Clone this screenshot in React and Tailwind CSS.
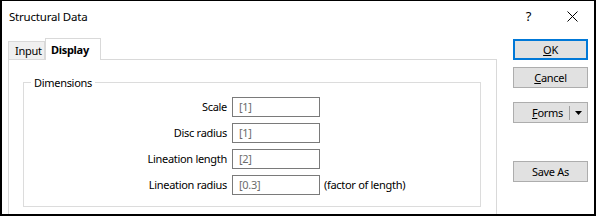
import React from "react";

const rows = [
  { label: "Scale", value: "[1]" },
  { label: "Disc radius", value: "[1]" },
  { label: "Lineation length", value: "[2]" },
  { label: "Lineation radius", value: "[0.3]", suffix: "(factor of length)" },
];

function Btn({ children, primary, className = "" }) {
  return (
    <div
      className={`w-[75px] h-[21px] flex items-center justify-center bg-[#e1e1e1] text-black ${
        primary ? "border-2 border-[#0078d7]" : "border border-[#adadad]"
      } ${className}`}
    >
      {children}
    </div>
  );
}

export default function App() {
  return (
    <div
      className="w-[596px] h-[216px] bg-white border-black border-t border-l-2 border-r-2 border-b-2 overflow-hidden flex flex-col text-[11px] leading-[14px] tracking-[-0.3px] text-black"
      style={{ fontFamily: '"Noto Sans", "Segoe UI", sans-serif' }}
    >
      {/* Title bar */}
      <div className="h-[37px] flex items-start shrink-0">
        <div className="pl-[7px] pt-[8px] text-[11.5px] leading-[16px] tracking-[-0.2px]">Structural Data</div>
        <div className="flex-1" />
        <div className="pt-[7px] text-[13px] leading-[16px] mr-[36px]">?</div>
        <svg className="mt-[10px] mr-[16px]" width="11" height="11" viewBox="0 0 11 11">
          <path d="M0.5 0.5 L10.5 10.5 M10.5 0.5 L0.5 10.5" stroke="#000" strokeWidth="1" fill="none" />
        </svg>
      </div>

      {/* Body */}
      <div className="flex flex-1 min-h-0">
        <div className="ml-[6px] w-[489px] flex flex-col">
          <div className="h-[21px] flex items-end shrink-0">
            <div className="w-[37px] h-[18px] border border-b-0 border-[#d9d9d9] bg-[#f0f0f0] pl-[6px] leading-[17px]">
              Input
            </div>
            <div className="relative z-10 -mb-px w-[56px] h-[22px] border border-b-0 border-[#d9d9d9] bg-white pl-[5px] pt-[3px] font-bold leading-[16px]">
              Display
            </div>
          </div>
          <div className="flex-1 border border-b-0 border-[#d9d9d9] bg-white pl-[14px] pt-[22px]">
            <div className="relative w-[458px] h-[125px] border border-[#dcdcdc] pt-[14px]">
              <div className="absolute left-[7px] top-[-7px] px-[3px] bg-white leading-[14px]">Dimensions</div>
              <div className="flex flex-col gap-[6px]">
                {rows.map((r) => (
                  <div key={r.label} className="flex items-center h-[20px]">
                    <div className="w-[203px] text-right">{r.label}</div>
                    <div className="ml-[5px] w-[88px] h-[20px] border border-[#7a7a7a] pl-[6px] flex items-center text-[#6d6d6d]">
                      {r.value}
                    </div>
                    {r.suffix && <div className="ml-[4px]">{r.suffix}</div>}
                  </div>
                ))}
              </div>
            </div>
          </div>
        </div>

        <div className="ml-[16px] flex flex-col">
          <Btn primary className="mt-[1px]">
            <span>
              <span className="underline underline-offset-[1px]">O</span>K
            </span>
          </Btn>
          <Btn className="mt-[7px]">
            <span>
              <span className="underline underline-offset-[1px]">C</span>ancel
            </span>
          </Btn>
          <div className="mt-[14px] w-[75px] h-[21px] flex items-center bg-[#e1e1e1] border border-[#adadad]">
            <div className="w-[55px] text-right pr-[6px]">
              <span className="underline underline-offset-[1px]">F</span>orms
            </div>
            <div className="w-px h-[14px] bg-[#a0a0a0]" />
            <div className="flex-1 flex items-center justify-center">
              <svg width="7" height="4" viewBox="0 0 7 4">
                <path d="M0 0 L7 0 L3.5 4 Z" fill="#000" />
              </svg>
            </div>
          </div>
          <Btn className="mt-[38px]">Save As</Btn>
        </div>
      </div>
    </div>
  );
}
